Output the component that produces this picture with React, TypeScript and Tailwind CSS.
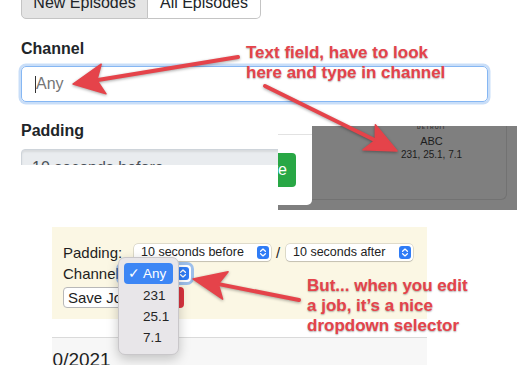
import React from "react";

type Pt = [number, number];

function arrowShapes(tail: Pt, tip: Pt, L: number, W: number) {
  const dx = tip[0] - tail[0];
  const dy = tip[1] - tail[1];
  const len = Math.hypot(dx, dy);
  const ux = dx / len;
  const uy = dy / len;
  const nx = -uy;
  const ny = ux;
  const bx = tip[0] - L * ux;
  const by = tip[1] - L * uy;
  const notchX = bx + 0.22 * L * ux;
  const notchY = by + 0.22 * L * uy;
  const poly = [
    [tip[0], tip[1]],
    [bx + W * nx, by + W * ny],
    [notchX, notchY],
    [bx - W * nx, by - W * ny],
  ]
    .map((p) => p.join(","))
    .join(" ");
  return { poly, lineEnd: [notchX + 2 * ux, notchY + 2 * uy] as Pt };
}

function Arrow({ tail, tip, L, W }: { tail: Pt; tip: Pt; L: number; W: number }) {
  const { poly, lineEnd } = arrowShapes(tail, tip, L, W);
  return (
    <g>
      <line
        x1={tail[0]}
        y1={tail[1]}
        x2={lineEnd[0]}
        y2={lineEnd[1]}
        stroke="#e5434a"
        strokeWidth={4}
        strokeLinecap="round"
      />
      <polygon points={poly} fill="#e5434a" strokeLinejoin="round" stroke="#e5434a" strokeWidth={1.5} />
    </g>
  );
}

function MacChevron() {
  return (
    <svg width="12" height="13" viewBox="0 0 12 13" className="shrink-0">
      <rect x="0" y="0" width="12" height="13" rx="3" fill="#2f7cf6" />
      <path d="M3.6 5.3 L6 3.1 L8.4 5.3" fill="none" stroke="white" strokeWidth="1.3" strokeLinecap="round" strokeLinejoin="round" />
      <path d="M3.6 7.7 L6 9.9 L8.4 7.7" fill="none" stroke="white" strokeWidth="1.3" strokeLinecap="round" strokeLinejoin="round" />
    </svg>
  );
}

function MacSelect({ label, width }: { label: string; width: string }) {
  return (
    <div
      className={`${width} h-[17px] bg-white rounded-[4px] shadow-[0_0_0_0.5px_rgba(0,0,0,0.22),0_1px_1px_rgba(0,0,0,0.12)] flex items-center justify-between pl-[7px] pr-[2px]`}
    >
      <span className="text-[12.5px] leading-[17px] text-[#222] whitespace-nowrap">{label}</span>
      <MacChevron />
    </div>
  );
}

export default function App() {
  return (
    <div className="relative w-[517px] h-[365px] overflow-hidden bg-white font-['Liberation_Sans',Arial,sans-serif] text-[#212529]">
      {/* Piece A: web form */}
      <div className="absolute left-0 top-0 w-[517px] h-[165px] overflow-hidden bg-white pl-[21px] flex flex-col">
        <div className="flex mt-[-19px] h-[38px] shrink-0">
          <div className="w-[127px] h-[38px] bg-[#e4e4e4] border border-[#c4c4c4] rounded-bl-[5px] flex items-center justify-center text-[16px] leading-[24px] pt-[5px]">
            New Episodes
          </div>
          <div className="w-[113px] h-[38px] bg-white border border-l-0 border-[#c4c4c4] rounded-br-[5px] flex items-center justify-center text-[16px] leading-[24px] pt-[5px]">
            All Episodes
          </div>
        </div>
        <div className="mt-[18px] text-[16px] leading-[24px] font-bold">Channel</div>
        <div className="mt-[5px] w-[467px] h-[36px] shrink-0 border border-[#86b7f3] rounded-[5px] shadow-[0_0_0_2.5px_rgba(100,160,235,0.35)] flex items-center pl-[13px]">
          <span className="w-[1px] h-[17px] bg-[#333]" />
          <span className="text-[16px] leading-[24px] text-[#757575]">Any</span>
        </div>
        <div className="mt-[17px] text-[16px] leading-[24px] font-bold">Padding</div>
        <div className="mt-[6px] w-[480px] h-[38px] shrink-0 bg-[#e9ecef] border border-[#ced4da] rounded-[4px] shadow-[inset_0_2px_2px_rgba(0,0,0,0.08)] flex items-center pl-[10px] text-[16px] leading-[24px] text-[#495057]">
          10 seconds before
        </div>
      </div>

      {/* Piece B: modal backdrop */}
      <div className="absolute left-[278px] top-[126px] w-[239px] h-[84px] bg-[#7f7f7f] overflow-hidden flex">
        <div className="w-[34px] h-[79px] bg-white rounded-br-[5px] flex flex-col shrink-0 overflow-hidden">
          <div className="h-[8px] shrink-0" />
          <div className="border-t border-[#e2e2e2]" />
          <div className="mt-[18px] w-[18px] h-[34px] bg-[#28a745] rounded-r-[4px] overflow-hidden flex items-center justify-end pr-[9px]">
            <span className="text-white text-[16px] leading-[24px] whitespace-nowrap">Save</span>
          </div>
        </div>
        <div className="w-[195px] h-[74px] border-r border-b border-[#727272] rounded-br-[6px] flex flex-col items-center">
          <div className="ml-[45px] w-[150px] flex flex-col items-center">
            <div className="mt-[-2px] text-[5px] leading-[6px] tracking-[1px] text-[#3a3a3a] font-bold">DETROIT</div>
            <div className="mt-[4px] text-[11px] leading-[14px] text-[#1c1c1c]">ABC</div>
            <div className="text-[10px] leading-[14px] text-[#1c1c1c]">231, 25.1, 7.1</div>
          </div>
        </div>
      </div>

      {/* Piece C: edit job screenshot */}
      <div className="absolute left-[52px] top-[227px] w-[375px] h-[138px] overflow-hidden flex flex-col">
        <div className="h-[92px] shrink-0 bg-[#fbf7e4] pl-[11px] flex flex-col">
          <div className="mt-[17px] h-[17px] flex items-center">
            <span className="w-[71px] text-[15px] leading-[17px] text-[#1e1e1e]">Padding:</span>
            <MacSelect label="10 seconds before" width="w-[137px]" />
            <span className="ml-[5px] w-[10px] text-[15px] leading-[17px] text-[#1e1e1e]">/</span>
            <MacSelect label="10 seconds after" width="w-[127px]" />
          </div>
          <div className="mt-[4px] h-[17px] flex items-center">
            <span className="text-[15px] leading-[17px] text-[#1e1e1e] w-[56px]">Channel</span>
            <div className="w-[72px] h-[17px] bg-white rounded-[4px] shadow-[0_0_0_3px_rgba(80,145,240,0.55)] flex items-center justify-end pr-[2px]">
              <MacChevron />
            </div>
          </div>
          <div className="mt-[5px] h-[21px] flex items-center gap-[4px]">
            <div className="w-[100px] h-[21px] bg-white border border-[#b8b8b8] rounded-[4px] flex items-center pl-[4px] text-[15px] leading-[17px] text-[#1e1e1e] whitespace-nowrap overflow-hidden">
              Save Job
            </div>
            <div className="w-[17px] h-[21px] bg-[#d9343f] rounded-[4px]" />
          </div>
        </div>
        <div className="h-[19px] shrink-0 bg-white border-b border-[#dadada]" />
        <div className="flex-1 bg-[#f7f7f7] pt-[10px] overflow-hidden">
          <div className="ml-[-10px] text-[19px] leading-[23px] text-[#1e1e1e] whitespace-nowrap">10/2021</div>
        </div>

        {/* dropdown popup */}
        <div className="absolute left-[66px] top-[30px] w-[61px] h-[98px] bg-[#e8e6e9] border border-[#c9c7ca] rounded-[7px] shadow-[0_4px_12px_rgba(0,0,0,0.22)] flex flex-col px-[5px] pt-[5px]">
          <div className="h-[21px] bg-[#3d86f5] rounded-[4px] flex items-center pl-[4px] text-white text-[13.5px] leading-[16px]">
            <span className="w-[15px]">✓</span>
            <span>Any</span>
          </div>
          <div className="mt-[1px] flex flex-col text-[13.5px] leading-[16px] text-[#242424]">
            <div className="h-[21px] flex items-center pl-[19px]">231</div>
            <div className="h-[21px] flex items-center pl-[19px]">25.1</div>
            <div className="h-[21px] flex items-center pl-[19px]">7.1</div>
          </div>
        </div>
      </div>

      {/* Annotations */}
      <svg
        className="absolute left-0 top-0 pointer-events-none drop-shadow-[0_1px_1.5px_rgba(0,0,0,0.35)]"
        width="517"
        height="365"
        viewBox="0 0 517 365"
      >
        <Arrow tail={[238, 57]} tip={[73, 84]} L={31} W={15} />
        <Arrow tail={[265, 86]} tip={[397, 151]} L={31} W={14} />
        <Arrow tail={[299, 300]} tip={[193, 279]} L={33} W={14} />
      </svg>
      <div className="absolute left-[246px] top-[43px] text-[17px] leading-[20px] font-bold text-[#e5434a] whitespace-nowrap [text-shadow:0_1px_1.5px_rgba(0,0,0,0.3)]">
        Text field, have to look
        <br />
        here and type in channel
      </div>
      <div className="absolute left-[307px] top-[276px] text-[17px] leading-[20px] font-bold text-[#e5434a] whitespace-nowrap [text-shadow:0_1px_1.5px_rgba(0,0,0,0.3)]">
        But... when you edit
        <br />
        a job, it’s a nice
        <br />
        dropdown selector
      </div>
    </div>
  );
}
